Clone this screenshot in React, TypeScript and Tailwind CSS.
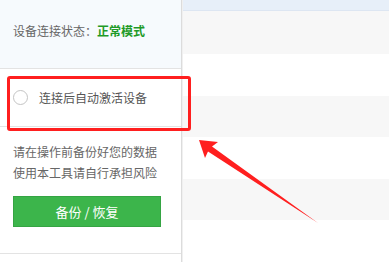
// 设备面板 — 左侧状态/选项栏 + 右侧条纹列表，红框与箭头为标注。

const rows = [
  { h: 'h-[50px]', bg: 'bg-[#f7f7f7]' },
  { h: 'h-[48px]', bg: 'bg-white' },
  { h: 'h-[47px]', bg: 'bg-[#f7f7f7]' },
  { h: 'h-[49px]', bg: 'bg-white' },
  { h: 'h-[47px]', bg: 'bg-[#f7f7f7]' },
  { h: 'h-[48px]', bg: 'bg-white' },
];

export default function App() {
  return (
    <div
      className="relative flex h-[262px] w-[389px] overflow-hidden bg-white text-[12px] text-[#666]"
      style={{ fontFamily: '"Microsoft YaHei", "Noto Sans CJK SC", sans-serif' }}
    >
      {/* 左侧面板 */}
      <aside className="flex w-[182px] shrink-0 flex-col border-r border-[#dcdcdc] bg-white">
        <div className="h-[69px] border-b border-[#e3e3e3] bg-[#f6fafd] pl-[13px] pt-[22px] leading-[17px]">
          设备连接状态：<span className="font-bold text-[#1e9a28]">正常模式</span>
        </div>
        <label className="flex h-[58px] items-center gap-[11px] border-b border-[#e3e3e3] pl-[13px] text-[#555]">
          <span className="h-[15px] w-[15px] rounded-full border border-[#c4c4c4] bg-white" />
          连接后自动激活设备
        </label>
        <div className="pl-[13px] pt-[14px] leading-[21px]">
          <p>请在操作前备份好您的数据</p>
          <p>使用本工具请自行承担风险</p>
        </div>
        <button className="ml-[13px] mt-[13px] h-[31px] w-[148px] border border-[#35a443] bg-[#3cb54b] text-[13px] text-white">
          备份 / 恢复
        </button>
        <div className="mt-[26px] border-b border-[#e3e3e3]" />
      </aside>

      {/* 右侧列表 */}
      <main className="flex flex-1 flex-col border-l border-[#f0f0f0]">
        <div className="h-[12px] border-b border-[#dde6f2] bg-[#e7eff9]" />
        {rows.map((r, i) => (
          <div key={i} className={`${r.h} ${r.bg}`} />
        ))}
      </main>

      {/* 标注：红框 */}
      <div className="pointer-events-none absolute left-[7px] top-[76px] h-[55px] w-[184px] rounded-[3px] border-[3px] border-[#ff1f1f]" />

      {/* 标注：箭头 */}
      <svg className="pointer-events-none absolute left-0 top-0" width="389" height="262">
        <polygon points="199,140 218,142 212,146.5 318,223 208,151.5 205,158" fill="#ff1f1f" />
      </svg>
    </div>
  );
}
